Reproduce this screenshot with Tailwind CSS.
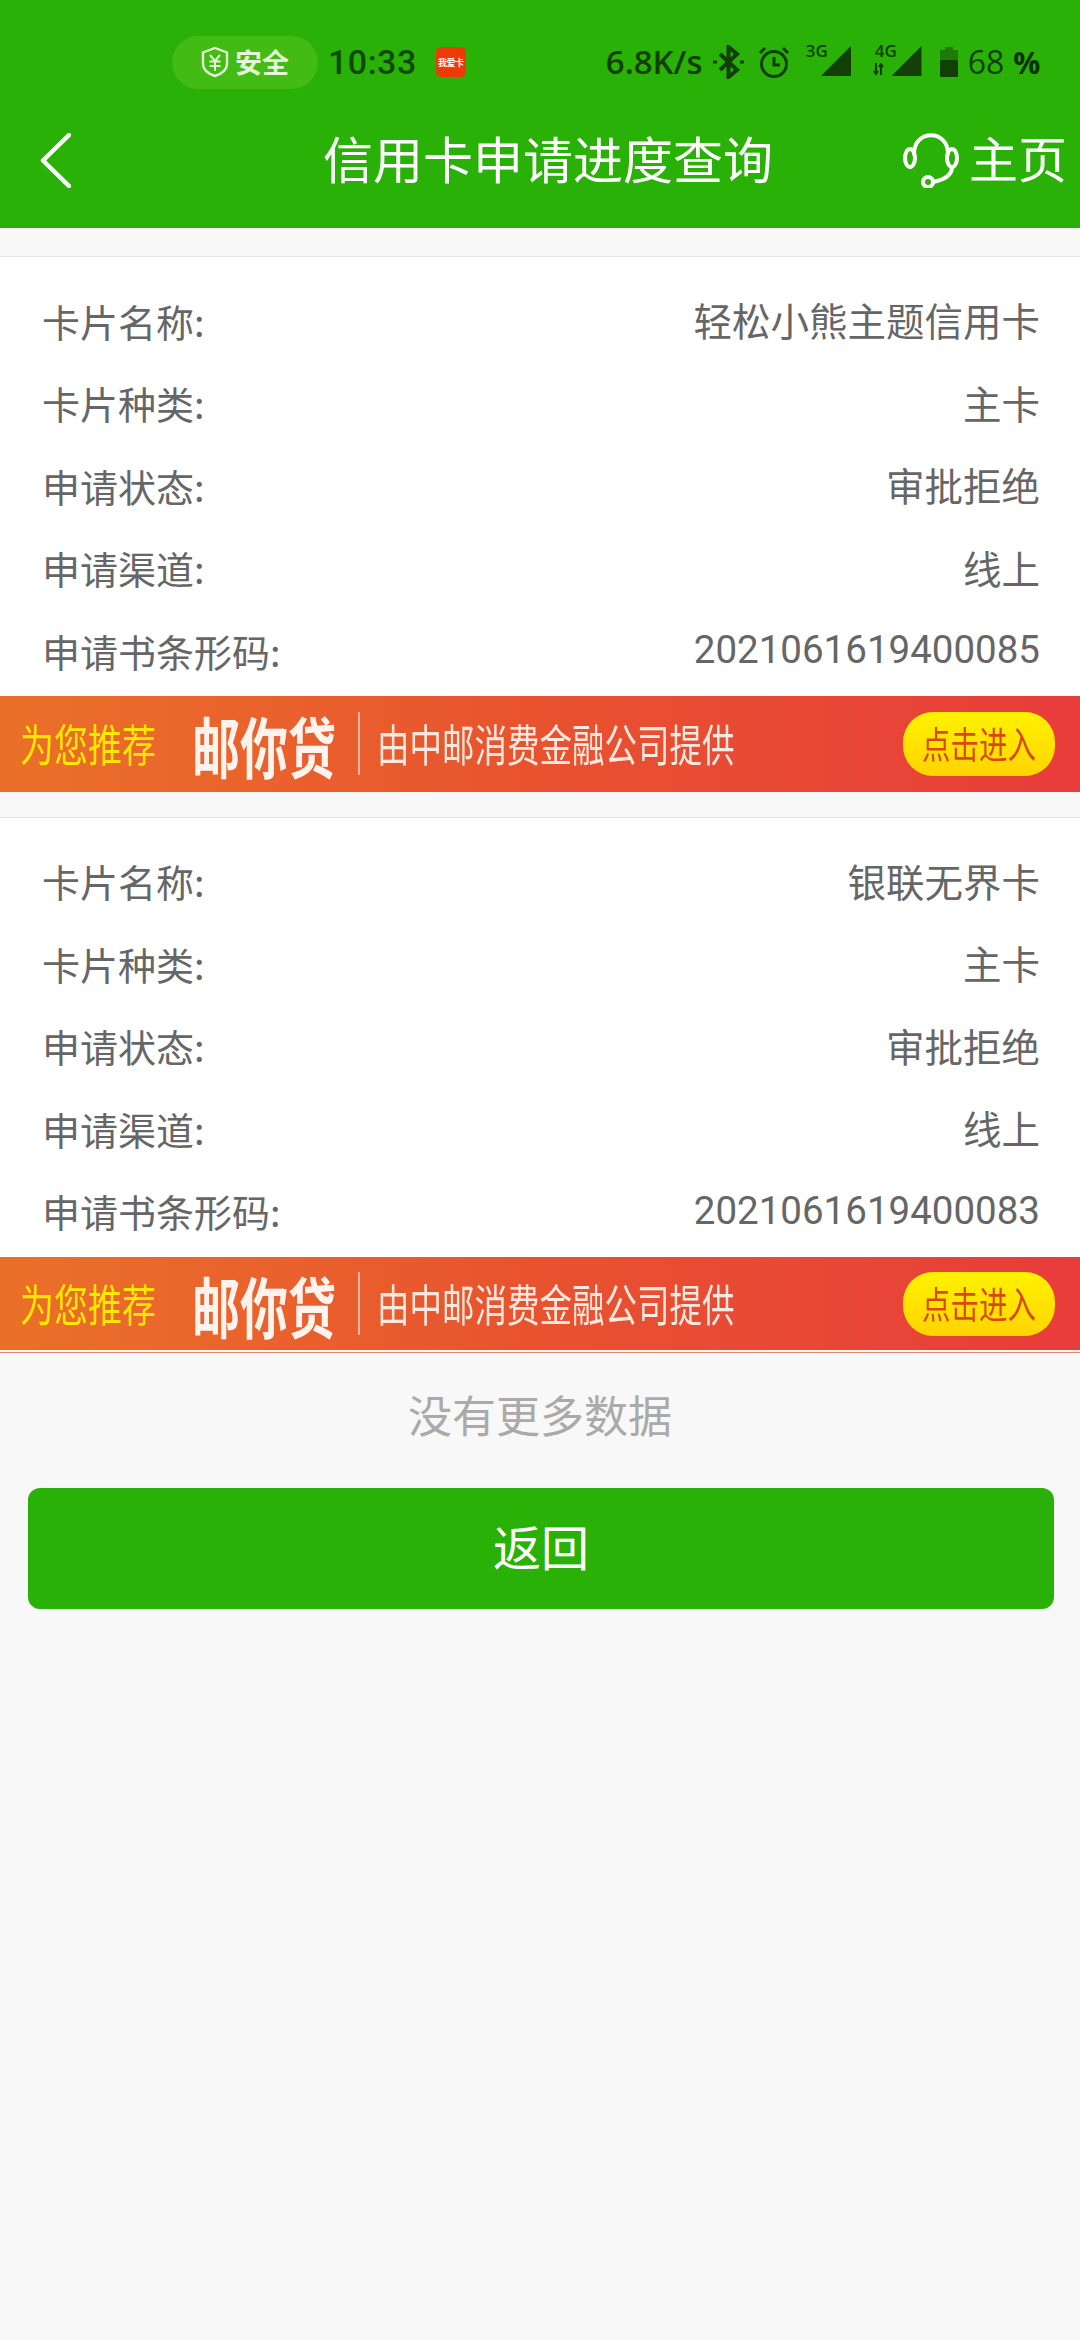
<!DOCTYPE html>
<html lang="zh-CN">
<head>
    <meta charset="UTF-8">
    <meta name="viewport" content="width=device-width, initial-scale=1.0">
    <title>信用卡申请进度查询</title>
    <script src="https://cdn.jsdelivr.net/npm/@tailwindcss/browser@4"></script>
</head>
<body class="bg-[#f8f8f8] min-h-screen font-['Noto_Sans_CJK_SC','Roboto',sans-serif]">
    <header class="bg-[#2ab107] h-[228px]">
        <!-- Barra de estado -->
        <div class="h-[124px] flex items-center text-[#0f4a05]">
            <div class="ml-[172px] w-[146px] h-[53px] rounded-full bg-[#42bb14] flex items-center justify-center gap-[6px] text-[#e4f7d8]">
                <svg class="w-[28px] h-[32px]" viewBox="0 0 28 32" fill="none" stroke="currentColor" stroke-width="2.4">
                    <path d="M14 2 L26 6.5 V18 C26 24 20 28 14 30 C8 28 2 24 2 18 V6.5 Z"/>
                    <path d="M9 9 L14 15 L19 9 M8.5 15.5 H19.5 M8.5 20 H19.5 M14 15 V25" stroke-width="2"/>
                </svg>
                <span class="text-[27px] font-bold">安全</span>
            </div>
            <span class="ml-[10px] text-[34px] font-medium font-['Roboto',sans-serif] tracking-[0.5px]">10:33</span>
            <div class="ml-[19px] w-[30px] h-[30px] rounded-[5px] bg-[#f03a05] flex items-center justify-center">
                <span class="text-[9px] leading-none font-bold text-white whitespace-nowrap tracking-[-0.5px]">我爱卡</span>
            </div>
            <span class="ml-[140px] w-[98px] text-[33px] font-semibold font-['Open_Sans',sans-serif] whitespace-nowrap text-[#123f05]">6.8K/s</span>
            <svg class="ml-[9px] w-[31px] h-[34px]" viewBox="0 0 31 34" fill="none" stroke="#123f05" stroke-width="4">
                <path d="M7 9 L24 25 L15.5 32 V2 L24 9 L7 25"/>
                <path d="M0 17 H4 M27 17 H31" stroke-width="3"/>
            </svg>
            <svg class="ml-[14px] w-[32px] h-[32px]" viewBox="0 0 32 32" fill="none" stroke="#123f05" stroke-width="3">
                <circle cx="16" cy="18" r="12.5"/>
                <path d="M16 11 V19 H22 M2 7 L7 2 M30 7 L25 2"/>
            </svg>
            <div class="ml-[16px] relative w-[45px] h-[32px]">
                <span class="absolute left-0 top-[-3px] text-[17px] leading-[16px] font-semibold font-['Open_Sans',sans-serif] text-[#123f05]">3G</span>
                <svg class="absolute right-0 top-0 w-[30px] h-[30px]" viewBox="0 0 30 30" fill="#123f05"><path d="M30 0 V30 H0 Z"/></svg>
            </div>
            <div class="ml-[22px] relative w-[49px] h-[32px]">
                <span class="absolute left-[2px] top-[-3px] text-[17px] leading-[16px] font-semibold font-['Open_Sans',sans-serif] text-[#123f05]">4G</span>
                <svg class="absolute left-0 top-[17px] w-[11px] h-[12px]" viewBox="0 0 11 12" fill="none" stroke="#123f05" stroke-width="2"><path d="M3 0 V11 M1 8 L3 11 L5 8 M8 12 V1 M6 4 L8 1 L10 4"/></svg>
                <svg class="absolute right-0 top-0 w-[31px] h-[30px]" viewBox="0 0 30 30" fill="#123f05"><path d="M30 0 V30 H0 Z"/></svg>
            </div>
            <svg class="ml-[18px] w-[18px] h-[30px]" viewBox="0 0 18 30">
                <path d="M5 0 H13 V3 H18 V13 H0 V3 H5 Z" fill="#1f7a08"/>
                <rect y="13" width="18" height="17" rx="1" fill="#123f05"/>
            </svg>
            <span class="ml-[10px] text-[32px] font-['Open_Sans',sans-serif] text-[#123f05]">68</span>
            <span class="ml-[9px] text-[30px] font-bold font-['Open_Sans',sans-serif] text-[#0b3003]">%</span>
        </div>

        <!-- Barra de navegación -->
        <div class="h-[72px] flex items-center text-white pl-[40px] pr-[13px]">
            <svg class="w-[31px] h-[55px] shrink-0" viewBox="0 0 31 55" fill="none" stroke="currentColor" stroke-width="4.5" stroke-linecap="round" stroke-linejoin="round">
                <path d="M29 2 L3 27.5 L29 53"/>
            </svg>
            <h1 class="ml-[252px] mb-[7px] text-[50px] leading-none whitespace-nowrap">信用卡申请进度查询</h1>
            <svg class="ml-auto w-[56px] h-[56px] shrink-0" viewBox="0 0 56 56" fill="none" stroke="currentColor" stroke-width="4" stroke-linecap="round">
                <path d="M11 22 C11 -3 45 -3 45 22"/>
                <ellipse cx="7" cy="26" rx="5" ry="9"/>
                <ellipse cx="49" cy="26" rx="5" ry="9"/>
                <path d="M49 35 C49 44 40 48 30 50"/>
                <circle cx="25" cy="50" r="5"/>
            </svg>
            <span class="ml-[10px] mb-[7px] text-[49px] leading-none whitespace-nowrap">主页</span>
        </div>
    </header>

    <main>
        <!-- Primera solicitud -->
        <section class="mt-[28px] bg-white border-t border-[#e4e4e4]">
            <dl class="pt-[22px] pb-[4px] pl-[42px] pr-[40px] text-[38.5px] text-[#666666]">
                <div class="h-[82.5px] flex items-center justify-between"><dt class="text-[38px]">卡片名称:</dt><dd>轻松小熊主题信用卡</dd></div>
                <div class="h-[82.5px] flex items-center justify-between"><dt class="text-[38px]">卡片种类:</dt><dd>主卡</dd></div>
                <div class="h-[82.5px] flex items-center justify-between"><dt class="text-[38px]">申请状态:</dt><dd>审批拒绝</dd></div>
                <div class="h-[82.5px] flex items-center justify-between"><dt class="text-[38px]">申请渠道:</dt><dd>线上</dd></div>
                <div class="h-[82.5px] flex items-center justify-between"><dt class="text-[38px]">申请书条形码:</dt><dd class="font-['Roboto',sans-serif]">2021061619400085</dd></div>
            </dl>
            <a class="h-[96px] bg-gradient-to-r from-[#ea7028] via-[#e8522f] to-[#e83c3b] flex items-center">
                <span class="ml-[20px] w-[136px] text-[34px] leading-none text-[#ffe800] scale-y-[1.3] blur-[0.4px] whitespace-nowrap">为您推荐</span>
                <span class="ml-[36px] text-[48px] leading-none font-bold text-[#fff3ee] scale-y-[1.38] blur-[0.4px] whitespace-nowrap">邮你贷</span>
                <span class="ml-[22px] w-[2px] h-[63px] bg-[#f3b9a0]"></span>
                <span class="ml-[17px] text-[32.5px] leading-none text-[#fde8df] scale-y-[1.38] blur-[0.4px] whitespace-nowrap">由中邮消费金融公司提供</span>
                <span class="ml-auto mr-[25px] w-[152px] h-[64px] rounded-[30px] bg-gradient-to-b from-[#fff200] to-[#ffd400] flex items-center justify-center">
                    <span class="text-[28.5px] leading-none text-[#d8480c] scale-y-[1.3] blur-[0.4px] whitespace-nowrap">点击进入</span>
                </span>
            </a>
        </section>

        <!-- Segunda solicitud -->
        <section class="mt-[25px] bg-white border-t border-[#e4e4e4]">
            <dl class="pt-[22px] pb-[5px] pl-[42px] pr-[40px] text-[38.5px] text-[#666666]">
                <div class="h-[82.5px] flex items-center justify-between"><dt class="text-[38px]">卡片名称:</dt><dd>银联无界卡</dd></div>
                <div class="h-[82.5px] flex items-center justify-between"><dt class="text-[38px]">卡片种类:</dt><dd>主卡</dd></div>
                <div class="h-[82.5px] flex items-center justify-between"><dt class="text-[38px]">申请状态:</dt><dd>审批拒绝</dd></div>
                <div class="h-[82.5px] flex items-center justify-between"><dt class="text-[38px]">申请渠道:</dt><dd>线上</dd></div>
                <div class="h-[82.5px] flex items-center justify-between"><dt class="text-[38px]">申请书条形码:</dt><dd class="font-['Roboto',sans-serif]">2021061619400083</dd></div>
            </dl>
            <a class="h-[93px] bg-gradient-to-r from-[#ea7028] via-[#e8522f] to-[#e83c3b] flex items-center">
                <span class="ml-[20px] w-[136px] text-[34px] leading-none text-[#ffe800] scale-y-[1.3] blur-[0.4px] whitespace-nowrap">为您推荐</span>
                <span class="ml-[36px] text-[48px] leading-none font-bold text-[#fff3ee] scale-y-[1.38] blur-[0.4px] whitespace-nowrap">邮你贷</span>
                <span class="ml-[22px] w-[2px] h-[63px] bg-[#f3b9a0]"></span>
                <span class="ml-[17px] text-[32.5px] leading-none text-[#fde8df] scale-y-[1.38] blur-[0.4px] whitespace-nowrap">由中邮消费金融公司提供</span>
                <span class="ml-auto mr-[25px] w-[152px] h-[64px] rounded-[30px] bg-gradient-to-b from-[#fff200] to-[#ffd400] flex items-center justify-center">
                    <span class="text-[28.5px] leading-none text-[#d8480c] scale-y-[1.3] blur-[0.4px] whitespace-nowrap">点击进入</span>
                </span>
            </a>
            <div class="h-[2px] bg-[#fdf3ef]"></div>
            <div class="h-[1px] bg-[#d98a70]"></div>
        </section>

        <p class="mt-[31px] text-center text-[44px] leading-[60px] text-[#aaaaaa]">没有更多数据</p>
        <div class="mt-[44px] pl-[28px] pr-[26px]">
            <button class="w-full h-[121px] pb-[8px] rounded-[12px] bg-[#2ab107] text-white text-[48px]">返回</button>
        </div>
    </main>
</body>
</html>
